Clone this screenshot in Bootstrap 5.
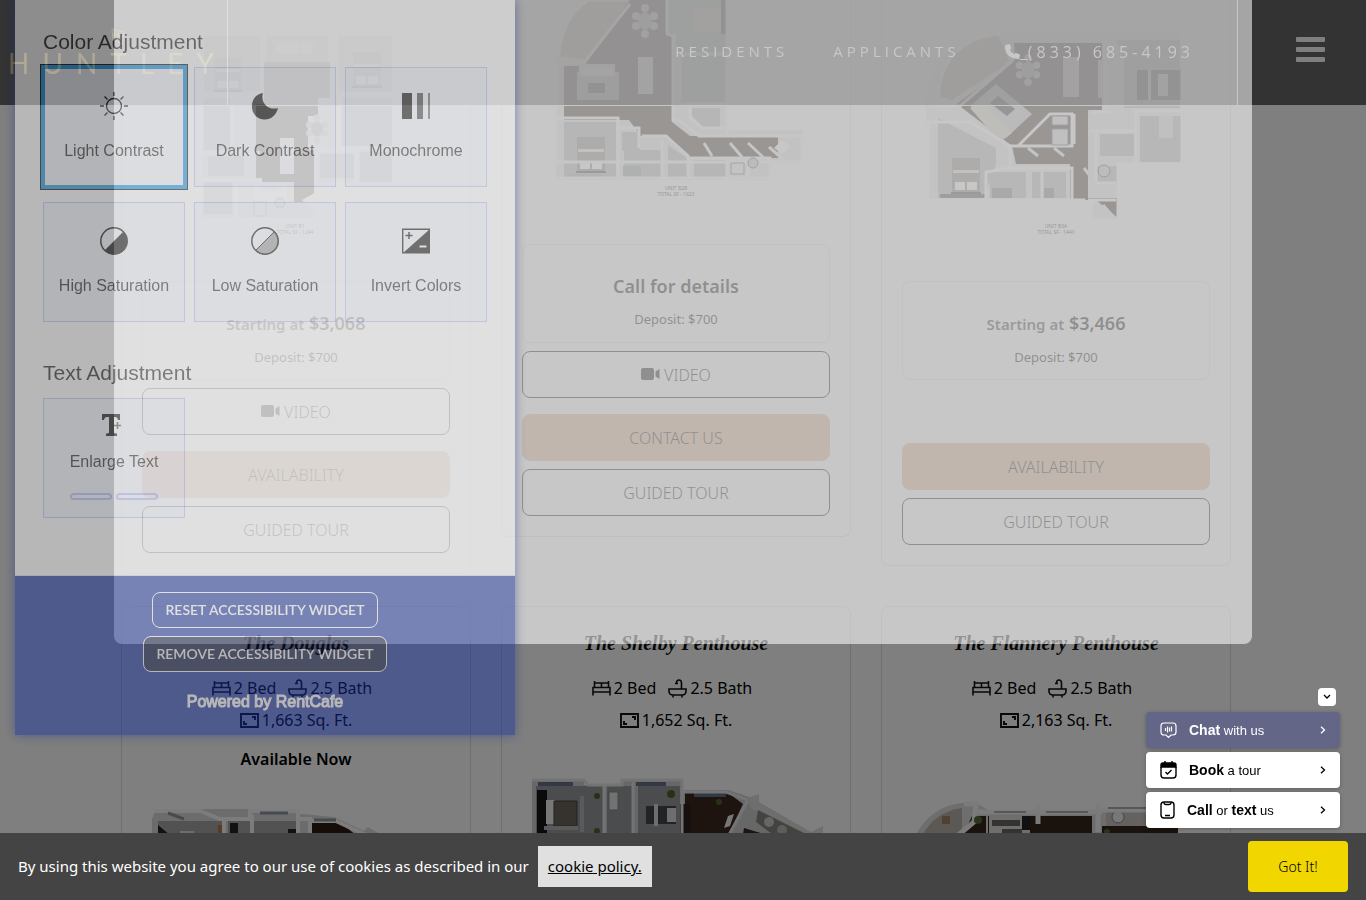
<!DOCTYPE html>
<html lang="en">
<head>
<meta charset="utf-8">
<meta name="viewport" content="width=device-width, initial-scale=1">
<title>Floor Plans | Huntley</title>
<link rel="stylesheet" href="https://cdn.jsdelivr.net/npm/bootstrap@5.3.0/dist/css/bootstrap.min.css">
<style>
  body { font-family: "Noto Sans", "Open Sans", sans-serif; font-size: 15px; color: #000; background: #fff; height: 100vh; overflow: hidden; padding-right: 14px; }
  button, a { font-family: inherit; }
  svg { display: block; }

  /* header */
  .site-head { height: 106px; z-index: 10; background: rgba(0,0,0,.6); border-bottom: 1px solid #fff; color: #fff; }
  .brand-cell { width: 228px; border-right: 1px solid #fff; }
  .brand-word { font-family: Lato, sans-serif; font-weight: 400; font-size: 28px; line-height: 28px; letter-spacing: 13px; color: #e3c878; text-decoration: none; }
  .head-nav { gap: 45px; padding: 0 43px 2px 0; }
  .head-nav a { font-family: "Open Sans", sans-serif; color: #fff; text-decoration: none; font-size: 15px; letter-spacing: 4px; }
  .head-nav .tel { font-size: 16px; }
  .burger-cell { width: 129px; border-left: 1px solid #fff; padding: 0 0 6px 16px; }
  .burger { background: none; border: 0; }

  /* floor plan cards */
  .plans-wrap { --bs-gutter-x: 30px; }
  .plans { --bs-gutter-x: 30px; }
  .plan-card { border: 1px solid #dedede; border-radius: 8px; padding: 0 20px 20px; }
  .first-row .plan-card { border-top: 0; border-radius: 0 0 8px 8px; }
  .first-row { margin-bottom: 32px; }
  .price-box { height: 99px; border: 1px solid #e2e2e2; border-radius: 8px; padding-top: 28px; margin-bottom: 8px; text-align: center; }
  .price-box h3 { font-size: 18px; line-height: 26px; font-weight: 600; margin: 0 0 10px; }
  .price-box h3 span { font-size: 15px; color: #333; }
  .price-box p { font-size: 13px; line-height: 20px; margin: 0; }
  .plan-btn { height: 47px; border: 1px solid #000; border-radius: 8px; font-size: 16px; font-weight: 300; color: #000; }
  .plan-btn.tan { background: #dfb08f; border-color: #dfb08f; }
  .no-video { margin-top: 63px; }
  .plan-title { font-family: "Liberation Serif", serif; font-style: italic; font-weight: 700; font-size: 20px; line-height: 26px; color: #111; margin: 0; padding-top: 23px; }
  .facts { font-size: 16px; line-height: 32px; }
  .facts .gap-fact { gap: 3px; }
  .avail { height: 24px; line-height: 24px; font-size: 16px; font-weight: 600; margin-top: 11px; }

  /* veil and dialog */
  .veil { z-index: 20; background: #000; opacity: .5; }
  .dialog-sheet { z-index: 30; inset: 0 0 auto; max-width: 1138px; margin: 0 auto; height: 644px; background: #fff; border-radius: 0 0 8px 8px; opacity: .56; }

  /* accessibility panel */
  .access { z-index: 40; top: 0; left: 15px; width: 500px; opacity: .44; background: #fff; color: #1a1a1a; font-family: "Liberation Sans", Arial, sans-serif; box-shadow: 0 0 10px #182a90; }
  .access-body { padding: 28px 28px 57px; }
  .access h2 { font-size: 21px; line-height: 27px; font-weight: 400; margin: 0 0 12px; }
  .access h2 + .tiles { margin-bottom: 37px; }
  .access .tiles:last-child { margin-bottom: 0; }
  .tiles { display: grid; grid-template-columns: repeat(3, 1fr); gap: 15px 9px; }
  .tile { height: 120px; background: #f6f8ff; border: 1px solid #b8c3ff; font-size: 16px; line-height: 24px; padding: 0; color: #1a1a1a; }
  .tile svg { margin: 0 auto 19px; }
  .tile.picked { outline: 1px solid #000; outline-offset: 2px; box-shadow: 0 0 0 2px #108fe6; border: 2px solid #108fe6; }
  .tile.sizer { padding-bottom: 6px; }
  .tile.sizer svg { margin-bottom: 11px; }
  .tile .steps { gap: 4px; margin-top: 19px; }
  .tile i { width: 42px; height: 7px; border: 2px solid #b0bcff; border-radius: 4px; }
  .access-foot { background: #132c9d; padding: 16px 0 21px; gap: 8px; border-top: 1px solid #d5daf5; }
  .access-foot button { height: 36px; border: 1px solid #fff; border-radius: 8px; color: #fff; background: none; font: 600 14px/20px Lato, sans-serif; padding: 0 12px; }
  .access-foot .dim { background: #0a1440; }
  .access-foot p { font-size: 16px; line-height: 24px; margin: 10px 0 0; color: #fff; -webkit-text-stroke: 1px #fff; }

  /* contact stack */
  .contact { z-index: 60; right: 26px; bottom: 72px; width: 194px; gap: 4px; font-family: "Liberation Sans", Arial, sans-serif; }
  .contact button { border: 0; border-radius: 4px; background: #fff; color: #000; }
  .contact .fold { width: 18px; height: 18px; margin: 0 4px 2px; padding: 0; }
  .contact .item { height: 36px; padding: 0 14px; font-size: 13px; text-align: left; box-shadow: 0 1px 4px rgba(0,0,0,.25); }
  .contact .item b { font-size: 14px; }
  .contact .chat { background: #646687; color: #fff; }

  /* cookie notice */
  .cookie { z-index: 50; min-height: 67px; background: #444; color: #fff; padding: 0 18px; font-size: 15px; }
  .cookie a { background: #e0e0e0; color: #000; padding: 0 10px; line-height: 41px; margin-left: 9px; }
  .cookie button { width: 100px; height: 51px; border: 0; border-radius: 4px; background: #f2d600; color: #000; font-size: 14px; font-weight: 300; }
</style>
</head>
<body>

<!-- shared symbols -->
<svg width="0" height="0" class="position-absolute" aria-hidden="true">
  <symbol id="bed" viewBox="0 0 19 15"><path d="M1 14.500V6.500h17v8M1 11h17M2.500 6V0M16.500 6V0M2.500 2h14M9.500 2v4.500" fill="none" stroke="#111" stroke-width="1.600"/></symbol>
  <symbol id="bath" viewBox="0 0 19 19"><path d="M1 10h17v2q0 4-4 4H5q-4 0-4-4zM13.500 10V4q0-3-2.500-3T8.500 4M7 4.500h3M5 16v2.500M14 16v2.500" fill="none" stroke="#111" stroke-width="1.600"/></symbol>
  <symbol id="area" viewBox="0 0 19 15"><path d="M1 1h17v13H1zM12 4h3v3M4 8v3h3" fill="none" stroke="#111" stroke-width="1.900"/></symbol>
  <symbol id="cam" viewBox="0 0 19 13"><path d="M2 0h9q2 0 2 2v8q0 2-2 2H2q-2 0-2-2V2Q0 0 2 0zM18.500 1v10l-4-2.500v-5z"/></symbol>
  <symbol id="chev" viewBox="0 0 6 8"><path d="M1 .8 4.500 4 1 7.200" fill="none" stroke="currentColor" stroke-width="1.300"/></symbol>
  <symbol id="sofa" viewBox="0 0 40 20"><path d="M0 0h40v14H0z" fill="#d9d4cb"/><path d="M3 4h10v9H3zM15 4h10v9H15zM27 4h10v9H27z" fill="#eee"/></symbol>
  <symbol id="sleep" viewBox="0 0 30 36"><path d="M0 34h30v2H0z" fill="#333"/><path d="M1 0h28v34H1z" fill="#8b8580"/><path d="M2 12h26v3H2z" fill="#e9e4da"/><path d="M4 24h10v8H4zM16 24h10v8H16z" fill="#fff"/></symbol>
  <symbol id="dine" viewBox="0 0 26 34"><g fill="#d8cfc0"><circle cx="13" cy="4" r="4"/><circle cx="13" cy="30" r="4"/><circle cx="4" cy="12" r="4"/><circle cx="4" cy="22" r="4"/><circle cx="22" cy="12" r="4"/><circle cx="22" cy="22" r="4"/></g><ellipse cx="13" cy="17" rx="7" ry="9" fill="#aaa"/></symbol>
</svg>

<header class="site-head position-fixed top-0 start-0 end-0 d-flex">
  <div class="brand-cell d-flex flex-column align-items-start ps-2">
    <svg class="mt-4 align-self-center" width="18" height="25" viewBox="0 0 18 25" fill="none" stroke="#e3c878"><path d="M3 5l12 3-2 12-9-4zM6 6l-2 8M10 7l-2 10M4 10l10 3"/></svg>
    <a class="brand-word" href="#">HUNTLEY</a>
  </div>
  <nav class="head-nav d-flex align-items-center ms-auto">
    <a href="#">RESIDENTS</a>
    <a href="#">APPLICANTS</a>
    <a href="#" class="tel d-flex align-items-center"><svg width="15" height="15" viewBox="0 0 16 16" fill="#fff"><path d="M1 1l3-1q1 0 1.300.8L6.500 4q.2.700-.4 1.200L5 6.200q1.500 3 4.800 4.800l1-1.200q.5-.6 1.200-.3l3.200 1.300q1 .4.800 1.300l-.8 3q-.2.900-1.200.9Q.3 15.500 0 2.200 0 1.300 1 1z"/></svg><u>&nbsp;</u>(833) 685-4193</a>
  </nav>
  <div class="burger-cell d-flex align-items-center justify-content-center">
    <button class="burger" aria-label="Menu"><svg width="29" height="25" fill="#fff"><rect width="29" height="5" rx="1"/><rect y="10" width="29" height="5" rx="1"/><rect y="20" width="29" height="5" rx="1"/></svg></button>
  </div>
</header>

<main class="container plans-wrap">
  <div class="row plans first-row align-items-start">
    <div class="col-4"><article class="plan-card">
      <svg width="100%" viewBox="0 0 308 281">
        <path d="M58 30h194v154h-78v36H58z" fill="#f0f0f0"/>
        <g fill="#c4c4c4"><path d="M62 36h56v55H62zM124 36h62v50h-62zM196 36h54v56h-54zM62 98h28v52H62zM66 156h36v20H66zM62 182h28v32H62zM200 98h50v48h-50zM178 154h34v24h-34zM218 152h32v30h-32z"/></g>
        <path d="M122 62h66v36h-12v50h-4v54h-20v-20h-38V104h8z" fill="#4d382d"/>
        <path d="M138 138h14v36h-14zM166 116h18v34h-18z" fill="#f7f7f7"/>
        <use href="#sleep" x="66" y="58" width="40" height="34"/><use href="#dine" x="164" y="114" width="22" height="30"/><use href="#sofa" x="132" y="40" width="40" height="20"/><use href="#sleep" x="206" y="52" width="38" height="36"/>
        <path d="M58 30h194v154h-76v36H58zM120 30v70M190 30v65M58 95h60M90 95v60M58 153h60M196 96v52h54M174 150h40v34M58 180h62M94 180v40M174 150v70" fill="none" stroke="#fff" stroke-width="4"/>
        <path d="M113 184l16 10 16-10v18h-32zM160 200l14-8v22z" fill="#fff"/>
        <path d="M112 202h12v14h-12z" fill="#eee" stroke="#999"/><circle cx="138" cy="203" r="5" fill="#ddd" stroke="#888"/>
        <g font-size="5" text-anchor="middle" fill="#333"><text x="153" y="228">UNIT B1</text><text x="153" y="234">TOTAL SF - 1244</text></g>
      </svg>
      <div class="price-box"><h3><span>Starting at</span> $3,068</h3><p>Deposit: $700</p></div>
      <button class="plan-btn btn w-100 d-flex align-items-center justify-content-center gap-1 mb-3"><svg width="19" height="13"><use href="#cam"/></svg>VIDEO</button>
      <button class="plan-btn btn tan w-100 mb-2">AVAILABILITY</button>
      <button class="plan-btn btn w-100">GUIDED TOUR</button>
    </article></div>

    <div class="col-4"><article class="plan-card">
      <svg width="100%" viewBox="0 0 308 244">
        <path d="M34 180V60Q36 20 62 0h144v130h75v32h-34v18z" fill="#e8e8e8"/>
        <path d="M38 56Q42 20 64 2h46L64 60z" fill="#b3aea4"/>
        <path d="M108 0h36v34h6v88l18 14h88v22h-88l-24-22h-25l-12-16H42V66h20z" fill="#2e211a"/>
        <path d="M146 0h58v52h-50V34h-8zM160 56h44v46h-44zM42 122h52v55H42zM100 132h18v30l-18-12zM102 150h38v27h-38zM146 145l20 14v18h-20zM172 160h34v17h-34zM170 108h28v20h-16l-12-12z" fill="#b2b3b4"/>
        <path d="M55 72h42v28H55z" fill="#aaa"/><use href="#sofa" x="56" y="64" width="38" height="18"/><path d="M66 83h17v10H66z" fill="#222"/>
        <path d="M116 57h15v37h-15z" fill="#e8e8e8"/><use href="#dine" x="110" y="4" width="26" height="34"/><path d="M171 8h30v24h-30z" fill="#dad3c6"/><path d="M199 0h5v34h-5z" fill="#222"/>
        <use href="#sleep" x="52" y="137" width="34" height="36"/><path d="M46 174h35v4H46z" fill="#aaa49a"/>
        <path d="M36 56Q40 18 66 0M108 4L64 60M145 0v34l6 2v84h6l20 16h103v26H34V60M34 118h62v62M95 128h22v20M120 136h24l22 20v22M140 140v40M205 0v134M166 158h82v20H34M205 160v20M226 160v20M151 54h54M165 104h40M168 104v14l12 10h22" fill="none" stroke="#f8f8f8" stroke-width="3"/>
        <path d="M182 143l8 13M208 143l12 14M226 143l15 14M247 147l15 13" stroke="#f4f4f4" stroke-width="3"/>
        <path d="M209 163h13v11h-13z" fill="#eee" stroke="#666"/><circle cx="231" cy="163" r="5" fill="#ccc" stroke="#555"/><path d="M101 166h18v10h-18z" fill="#8f9a98"/><path d="M252 148l8-8 8 6-8 8z" fill="#fff"/>
        <g font-size="5" text-anchor="middle" fill="#222"><text x="154" y="190">UNIT B2B</text><text x="154" y="196">TOTAL SF - 1623</text></g>
      </svg>
      <div class="price-box"><h3>Call for details</h3><p>Deposit: $700</p></div>
      <button class="plan-btn btn w-100 d-flex align-items-center justify-content-center gap-1 mb-3"><svg width="19" height="13"><use href="#cam"/></svg>VIDEO</button>
      <button class="plan-btn btn tan w-100 mb-2">CONTACT US</button>
      <button class="plan-btn btn w-100">GUIDED TOUR</button>
    </article></div>

    <div class="col-4"><article class="plan-card">
      <svg width="100%" viewBox="0 0 308 281">
        <path d="M24 201V96Q34 40 92 30h190v134h-65v55h-26v-18z" fill="#eee"/>
        <path d="M36 96Q42 42 96 36l12 26-58 38z" fill="#b3aea4"/>
        <path d="M112 43h88v67h-14v88h30v20l-22-18h-26v-36h-54l-4-18-55-42 58-44z" fill="#2e211a"/>
        <path d="M214 40h64v68h-56V60zM36 118l58 30v16l-12 34H36zM88 172h36v26H88zM130 172h34v26h-34zM198 134h34v22h-34zM238 116h42v46h-42zM194 166h22v16h-22z" fill="#b4b5b6"/>
        <path d="M94 84l36 30-26 24-36-32z" fill="#c4c4c4"/><path d="M68 108l12-5 30 30-12 9z" fill="#d9d2c5"/><path d="M96 96l17 13-8 7-17-13z" fill="#222"/>
        <path d="M161 57h16v40h-16z" fill="#dedede"/><use href="#dine" x="112" y="54" width="28" height="32"/><path d="M196 60h8v38h-8z" fill="#ddd"/>
        <path d="M235 70h44v30h-44z" fill="#333"/><path d="M246 69h3v31h-3zM256 74h10v22h-10z" fill="#ddd"/>
        <use href="#sleep" x="48" y="158" width="32" height="36"/><path d="M38 194h46v4H38z" fill="#444"/>
        <path d="M36 98Q40 40 96 32h184v132h-64v56h-26l-8-20H26V122h42l40 24h62v-32h-22l-32 32M28 106h30l52-45M108 146v22l-24 4v28M110 168h60v32M140 170v30M188 131h46v-20h46M194 131v52h20M190 112h20M172 114v30M234 112v52M203 42v66M186 200h28" fill="none" stroke="#fff" stroke-width="3"/>
        <path d="M126 148l10 8M152 148l10 8M182 168l12 16M201 205l12 14M110 60l-34 30" stroke="#eee" stroke-width="3"/>
        <path d="M150 129h16v16h-16zM150 116h16v9h-16z" fill="#ddd" stroke="#555"/><circle cx="202" cy="171" r="6" fill="#ccc" stroke="#444"/><path d="M90 188h20v10H90zM142 188h10v10h-10z" fill="#777"/><path d="M257 116h14v22h-14z" fill="#ddd"/>
        <g font-size="5" text-anchor="middle" fill="#222"><text x="154" y="228">UNIT B3A</text><text x="154" y="234">TOTAL SF - 1440</text></g>
      </svg>
      <div class="price-box mb-0"><h3><span>Starting at</span> $3,466</h3><p>Deposit: $700</p></div>
      <button class="plan-btn btn tan w-100 mb-2 no-video">AVAILABILITY</button>
      <button class="plan-btn btn w-100">GUIDED TOUR</button>
    </article></div>
  </div>

  <div class="row plans text-center">
    <div class="col-4"><article class="plan-card">
      <h2 class="plan-title">The Douglas</h2>
      <div class="facts mt-3">
        <div class="d-flex justify-content-center gap-2 pe-2"><span class="gap-fact d-flex align-items-center"><svg width="19" height="15"><use href="#bed"/></svg>2 Bed</span><span class="gap-fact d-flex align-items-center ms-1"><svg width="19" height="19"><use href="#bath"/></svg>2.5 Bath</span></div>
        <div class="gap-fact d-flex justify-content-center align-items-center"><svg width="19" height="15"><use href="#area"/></svg>1,663 Sq. Ft.</div>
      </div>
      <div class="avail">Available Now</div>
      <svg width="100%" viewBox="0 -4 308 160">
        <path d="M10 160V44l4-10h136v4l42 4 30 14 4-4 10 6-4 8v94z" fill="#d8d8d8"/>
        <path d="M16 46h64v60H16zM86 46h22v60H86zM112 46h44v60h-44z" fill="#a4a5a7"/><path d="M168 46h28l36 28v60h-64z" fill="#2c1b12"/>
        <path d="M12 36h46l20 8h30V36h48v70M82 44v62M110 40v66M156 44h12v62M168 46h26l34 16" fill="none" stroke="#f8f8f8" stroke-width="4"/>
        <path d="M16 50l12 10h30v10H16zM146 54h8v14h-8zM88 48h8v12h-8z" fill="#222"/><path d="M38 56h14v14H38z" fill="#ddd"/><path d="M76 50h4v18h-4z" fill="#b07a48"/><path d="M26 38l16 6M118 38h28M172 45h22" stroke="#8b96a0" stroke-width="3"/>
      </svg>
    </article></div>

    <div class="col-4"><article class="plan-card">
      <h2 class="plan-title">The Shelby Penthouse</h2>
      <div class="facts mt-3">
        <div class="d-flex justify-content-center gap-2 pe-2"><span class="gap-fact d-flex align-items-center"><svg width="19" height="15"><use href="#bed"/></svg>2 Bed</span><span class="gap-fact d-flex align-items-center ms-1"><svg width="19" height="19"><use href="#bath"/></svg>2.5 Bath</span></div>
        <div class="gap-fact d-flex justify-content-center align-items-center"><svg width="19" height="15"><use href="#area"/></svg>1,652 Sq. Ft.</div>
      </div>
      <div class="avail"></div>
      <svg width="100%" viewBox="0 3 308 160">
        <path d="M10 170V12h52v5h38v-5h60v10h46l24 8 70 42v98z" fill="#cfcfcf"/>
        <path d="M14 18h67v52H14zM85 18h25v52H85zM116 18h42v52h-42z" fill="#97989a"/>
        <path d="M163 24h42l16 12-16 34h-42zM222 60l40 12h-42z" fill="#3a291f"/><path d="M158 36h11v36h-11z" fill="#2d211c"/>
        <path d="M15 22h10v48H15z" fill="#151517"/><path d="M24 32h9v24h-9z" fill="#eee"/><path d="M32 33h23v25H32z" fill="#6d665f" stroke="#444"/><path d="M22 60h34M60 28v36" stroke="#b5b5b5" stroke-width="4"/><path d="M124 38h30v18h-30z" fill="#44464a"/><path d="M132 36h4v22h-4zM145 40h9v14h-9z" fill="#ddd"/>
        <path d="M16 16h35M114 16h30M172 27h32" stroke="#66708c" stroke-width="4"/>
        <path d="M10 12h52l4 5h34v-5h60v12h44l22 8-24 44M82 17v56M111 14v58M160 20v52" fill="none" stroke="#e8e8e8" stroke-width="3"/>
        <path d="M87 24h9v18h-9z" fill="#e4e4e4" stroke="#888"/><path d="M225 30l12-4v8l52 30 12-6v10l-10 6-62-34z" fill="#ddd"/><path d="M236 42l60 30h-38l-24-18z" fill="#8b8780"/><circle cx="247" cy="54" r="5" fill="#ccc"/><circle cx="260" cy="62" r="5" fill="#bbb"/><path d="M206 48l6-2-4 12-6 2z" fill="#eee"/>
        <g fill="#52622a"><circle cx="75" cy="28" r="3"/><circle cx="149" cy="26" r="4"/><circle cx="75" cy="63" r="3"/><circle cx="197" cy="34" r="3"/></g>
      </svg>
    </article></div>

    <div class="col-4"><article class="plan-card">
      <h2 class="plan-title">The Flannery Penthouse</h2>
      <div class="facts mt-3">
        <div class="d-flex justify-content-center gap-2 pe-2"><span class="gap-fact d-flex align-items-center"><svg width="19" height="15"><use href="#bed"/></svg>2 Bed</span><span class="gap-fact d-flex align-items-center ms-1"><svg width="19" height="19"><use href="#bath"/></svg>2.5 Bath</span></div>
        <div class="gap-fact d-flex justify-content-center align-items-center"><svg width="19" height="15"><use href="#area"/></svg>2,163 Sq. Ft.</div>
      </div>
      <div class="avail"></div>
      <svg width="100%" viewBox="0 5 308 160">
        <path d="M14 170V68Q30 40 60 37h14l12 7h156l30 6v120z" fill="#ddd"/>
        <path d="M20 70Q32 46 60 42v22l-26 20z" fill="#b8b3a8"/><path d="M40 50h8v8h-8z" fill="#a08362"/>
        <path d="M70 50h14v22H60zM86 50h34v22H86zM128 50h62v22h-62zM200 60h76v20h-76z" fill="#33241b"/>
        <path d="M87 50h34v20H87z" fill="#e0ddd6"/><path d="M90 54h28v6H90zM100 63h20v7h-20z" fill="#666"/><path d="M120 50h9v14h-9z" fill="#222"/>
        <path d="M204 44h42v16h-42z" fill="#c8c5c0"/><circle cx="216" cy="51" r="6" fill="#eee" stroke="#888"/>
        <path d="M62 38h12l-2 18-24 20M76 46h124M136 38v20M196 38v28M200 44h60M154 70h16" fill="none" stroke="#f6f6f6" stroke-width="5"/>
        <path d="M92 46h32M144 46h42M206 42h40" stroke="#a8b0b8" stroke-width="2"/><circle cx="76" cy="54" r="4" fill="#586a32"/><circle cx="205" cy="66" r="3" fill="#586a32"/>
      </svg>
    </article></div>
  </div>
</main>

<div class="veil position-fixed top-0 start-0 w-100 h-100"></div>
<div class="dialog-sheet position-fixed" role="dialog" aria-label="Floor plan details"></div>

<aside class="access position-fixed" aria-label="Accessibility">
  <div class="access-body">
    <h2>Color Adjustment</h2>
    <div class="tiles">
      <button class="tile picked"><svg width="28" height="28" viewBox="0 0 28 28" fill="none" stroke="#000" stroke-width="1.300"><circle cx="14" cy="14" r="7.500"/><path d="M14 0v4M14 24v4M0 14h4M24 14h4M4.500 4.500l3 3M20.500 20.500l3 3M4.500 23.500l3-3M20.500 7.500l3-3"/></svg>Light Contrast</button>
      <button class="tile"><svg width="28" height="28" viewBox="0 0 28 28"><path d="M12 1C9 10 17 19 27 16 25 24 19 28 13 27.500-3 26-3 3 12 1z"/></svg>Dark Contrast</button>
      <button class="tile"><svg width="28" height="28" viewBox="0 0 28 28"><path d="M0 1h10v26H0z"/><path d="M15 1h6v26h-6z" opacity=".75"/><path d="M26 1h2v26h-2z" opacity=".6"/></svg>Monochrome</button>
      <button class="tile"><svg width="28" height="28" viewBox="0 0 28 28"><circle cx="14" cy="14" r="13.200" fill="none" stroke="#000" stroke-width="1.500"/><path d="M23.500 4.500A13.400 13.400 0 0 1 4.500 23.500z"/></svg>High Saturation</button>
      <button class="tile"><svg width="28" height="28" viewBox="0 0 28 28"><path d="M23.500 4.500A13.400 13.400 0 0 1 4.500 23.500z" fill="#999" stroke="#000"/><circle cx="14" cy="14" r="13.200" fill="none" stroke="#000" stroke-width="1.500"/></svg>Low Saturation</button>
      <button class="tile"><svg width="28" height="28" viewBox="0 0 28 28"><path d="M.7 2.200h26.600v23.600H.7z" fill="none" stroke="#000" stroke-width="1.400"/><path d="M28 2v24H1z"/><path d="M3.500 8.500h7M7 5v7" stroke="#000" stroke-width="1.500"/><path d="M17.500 19.500h7" stroke="#fff" stroke-width="2"/></svg>Invert Colors</button>
    </div>
    <h2>Text Adjustment</h2>
    <div class="tiles">
      <button class="tile sizer"><svg width="28" height="28" viewBox="0 0 28 28"><path d="M2 3h18v6h-2q-.5-3-3-3h-1v15q0 1.500 3 1.500V25H6v-2.500q3 0 3-1.500V6H7Q4.500 6 4 9H2z"/><path d="M14 14.500h7M17.500 11v7" stroke="#444" stroke-width="1.600"/></svg><span class="d-block">Enlarge Text</span><span class="steps d-flex justify-content-center"><i></i><i></i></span></button>
    </div>
  </div>
  <div class="access-foot d-flex flex-column align-items-center">
    <button>RESET ACCESSIBILITY WIDGET</button>
    <button class="dim">REMOVE ACCESSIBILITY WIDGET</button>
    <p>Powered by RentCafe</p>
  </div>
</aside>

<section class="cookie position-fixed bottom-0 start-0 end-0 d-flex align-items-center justify-content-between">
  <div>By using this website you agree to our use of cookies as described in our<a class="d-inline-block" href="#">cookie policy.</a></div>
  <button>Got It!</button>
</section>

<div class="contact position-fixed d-flex flex-column">
  <button class="fold align-self-end d-flex align-items-center justify-content-center" aria-label="Collapse"><svg width="8" height="6" viewBox="0 0 8 6" fill="none" stroke="#000" stroke-width="1.300"><path d="M1 1l3 3 3-3"/></svg></button>
  <button class="item chat d-flex align-items-center"><svg class="me-2" width="17" height="17" viewBox="0 0 17 17" fill="none" stroke="#fff" stroke-width="1.200"><path d="M4 1h9q3 0 3 3v6q0 3-3 3h-2l-2.500 2.500L6 13H4q-3 0-3-3V4q0-3 3-3zM5.500 6v3M7.500 4.500v6M9.500 5.500v4M11.500 4.500v5"/></svg><span class="ms-1 flex-grow-1"><b>Chat</b> with us</span><svg width="6" height="8"><use href="#chev"/></svg></button>
  <button class="item d-flex align-items-center"><svg class="me-2" width="17" height="18" viewBox="0 0 17 18" fill="none" stroke="#000" stroke-width="1.400"><path d="M1 6V4q0-2 2-2h11q2 0 2 2v2z" fill="#000"/><path d="M1 6v8q0 3 3 3h9q3 0 3-3V6M5 0v3M12 0v3M5.500 11l2 2 4-4"/></svg><span class="ms-1 flex-grow-1"><b>Book</b> a tour</span><svg width="6" height="8"><use href="#chev"/></svg></button>
  <button class="item d-flex align-items-center"><svg class="me-2" width="15" height="18" viewBox="0 0 15 18" fill="none" stroke="#000" stroke-width="1.400"><rect x="1" y="1" width="13" height="16" rx="3"/><path d="M4 1.500q0 2 2 2h3q2 0 2-2M5 14.500h5"/></svg><span class="ms-1 flex-grow-1"><b>Call</b> or <b>text</b> us</span><svg width="6" height="8"><use href="#chev"/></svg></button>
</div>

<script src="https://cdn.jsdelivr.net/npm/bootstrap@5.3.0/dist/js/bootstrap.bundle.min.js"></script>
</body>
</html>
